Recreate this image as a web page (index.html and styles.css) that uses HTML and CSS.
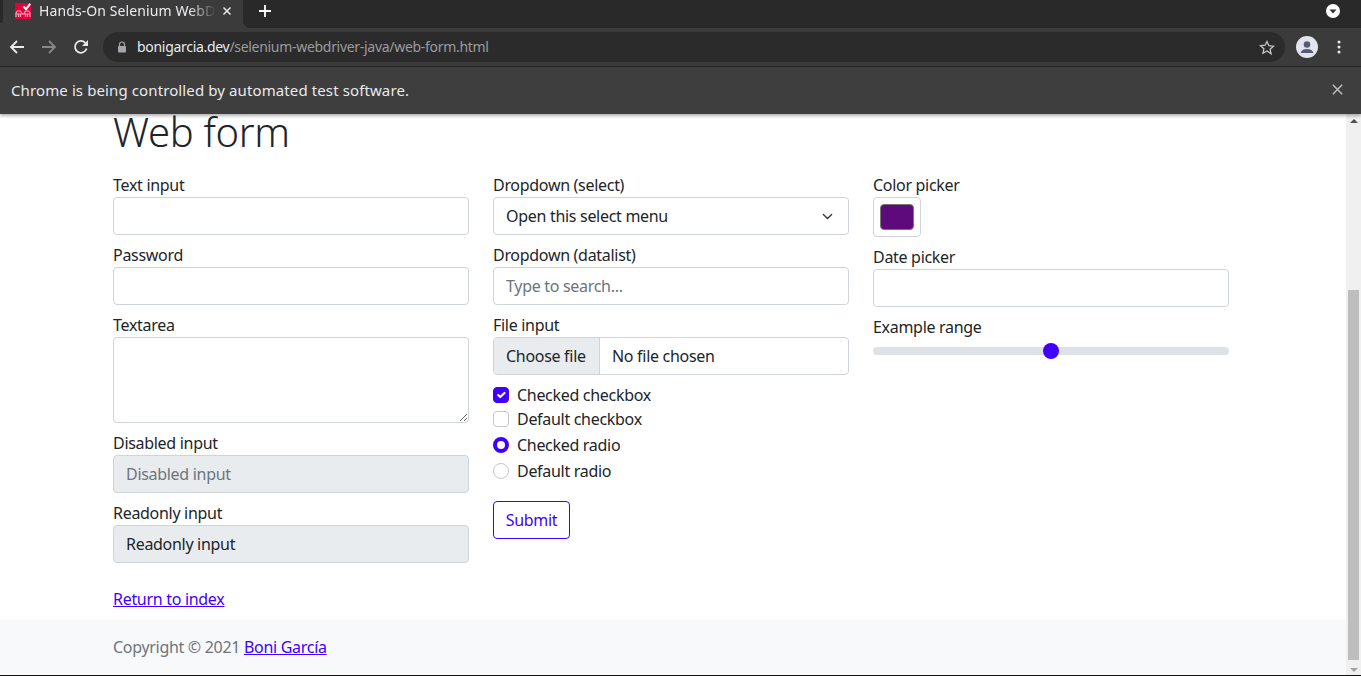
FILE: index.html
```html
<!DOCTYPE html>
<html lang="en">
<head>
    <meta charset="UTF-8">
    <meta name="viewport" content="width=device-width, initial-scale=1.0">
    <title>Hands-On Selenium WebDriver with Java</title>
    <link rel="stylesheet" href="styles.css">
</head>
<body>
    <!-- Barra de abas -->
    <div class="tabbar">
        <div class="tab">
            <svg class="favicon" width="16" height="16" viewBox="0 0 16 16">
                <rect width="16" height="16" fill="#e4003a"/>
                <path d="M8.500 3.500l2.500 2.700L15.200 .8" fill="none" stroke="#fff" stroke-width="2"/>
                <path d="M1 14v-4l1.500-2h3L7 10.500h2L10.500 8h3L15 10v4M1 11h14M3.500 14v-2.500M5.500 14v-2.500M10.500 14v-2.500M12.500 14v-2.500" fill="none" stroke="#f9a6bc" stroke-width="1.200"/>
            </svg>
            <span class="tab-title">Hands-On Selenium WebDriver with Java</span>
            <svg class="tab-close" width="10" height="10" viewBox="0 0 10 10">
                <path d="M1.500 1.500l7 7M8.500 1.500l-7 7" stroke="#e8eaed" stroke-width="1.500"/>
            </svg>
        </div>
        <svg class="tab-new" width="14" height="14" viewBox="0 0 14 14">
            <path d="M7 1v12M1 7h12" stroke="#fff" stroke-width="1.800"/>
        </svg>
        <svg class="tab-search" width="14" height="14" viewBox="0 0 14 14">
            <circle cx="7" cy="7" r="7" fill="#fff"/>
            <path d="M3.500 5.500h7L7 9.500z" fill="#333"/>
        </svg>
    </div>

    <!-- Barra de endereco -->
    <div class="toolbar">
        <svg class="nav-icon" width="16" height="16" viewBox="0 0 16 16">
            <path d="M15 8H2M8 2L2 8l6 6" fill="none" stroke="#e8eaed" stroke-width="1.800"/>
        </svg>
        <svg class="nav-icon" width="16" height="16" viewBox="0 0 16 16">
            <path d="M1 8h13M8 2l6 6-6 6" fill="none" stroke="#85878a" stroke-width="1.800"/>
        </svg>
        <svg class="nav-icon" width="16" height="16" viewBox="0 0 16 16">
            <path d="M13.600 9.500A5.900 5.900 0 1 1 12.300 3.900" fill="none" stroke="#e8eaed" stroke-width="1.800"/>
            <path d="M15 1v6H9z" fill="#e8eaed"/>
        </svg>
        <div class="omnibox">
            <svg class="lock" width="10" height="12" viewBox="0 0 10 12">
                <path d="M2.500 5V3.500a2.500 2.500 0 0 1 5 0V5" fill="none" stroke="#a3a5a8" stroke-width="1.200"/>
                <rect x="1" y="5" width="8" height="6.500" rx="1" fill="#a3a5a8"/>
            </svg>
            <span class="url-host">bonigarcia.dev</span><span class="url-path">/selenium-webdriver-java/web-form.html</span>
            <svg class="star" width="16" height="15" viewBox="0 0 16 15">
                <path d="M8 1.500l1.900 4.200 4.600.5-3.400 3.100 1 4.500L8 11l-4.100 2.300 1-4.500-3.400-3.100 4.600-.5z" fill="none" stroke="#c4c6c9" stroke-width="1.300"/>
            </svg>
        </div>
        <svg class="avatar" width="22" height="22" viewBox="0 0 22 22">
            <circle cx="11" cy="11" r="11" fill="#e3e5ee"/>
            <circle cx="11" cy="8.500" r="3.300" fill="#555b77"/>
            <path d="M4.800 16.500c.6-2.500 3.300-3.500 6.200-3.500s5.600 1 6.200 3.500v.5H4.800z" fill="#555b77"/>
        </svg>
        <svg class="kebab" width="4" height="14" viewBox="0 0 4 14">
            <circle cx="2" cy="2" r="1.500" fill="#e8eaed"/>
            <circle cx="2" cy="7" r="1.500" fill="#e8eaed"/>
            <circle cx="2" cy="12" r="1.500" fill="#e8eaed"/>
        </svg>
    </div>

    <!-- Aviso de automacao -->
    <div class="infobar">
        <span>Chrome is being controlled by automated test software.</span>
        <svg width="11" height="11" viewBox="0 0 11 11">
            <path d="M.8.800l9.400 9.400M10.200.800L.8 10.200" stroke="#bcbec1" stroke-width="1.500"/>
        </svg>
    </div>

    <div class="viewport">
        <div class="page">
            <main class="container">
                <h1 class="title">Web form</h1>
                <form class="form-grid" onsubmit="return false">
                    <div class="col">
                        <label class="field">Text input
                            <input class="control" type="text">
                        </label>
                        <label class="field">Password
                            <input class="control" type="password">
                        </label>
                        <label class="field">Textarea
                            <textarea class="control control-area"></textarea>
                        </label>
                        <label class="field">Disabled input
                            <input class="control" type="text" placeholder="Disabled input" disabled>
                        </label>
                        <label class="field">Readonly input
                            <input class="control control-readonly" type="text" value="Readonly input" readonly>
                        </label>
                    </div>
                    <div class="col">
                        <label class="field">Dropdown (select)
                            <select class="control control-select">
                                <option>Open this select menu</option>
                            </select>
                        </label>
                        <label class="field">Dropdown (datalist)
                            <input class="control" type="text" placeholder="Type to search...">
                        </label>
                        <label class="field">File input
                            <span class="control file-group">
                                <span class="file-button">Choose file</span>
                                <span class="file-name">No file chosen</span>
                            </span>
                        </label>
                        <div class="checks">
                            <label class="check"><input class="box" type="checkbox" checked>Checked checkbox</label>
                            <label class="check"><input class="box" type="checkbox">Default checkbox</label>
                            <label class="check check-radio"><input class="dot" type="radio" name="r" checked>Checked radio</label>
                            <label class="check check-radio"><input class="dot" type="radio" name="r">Default radio</label>
                        </div>
                        <button class="btn-submit" type="submit">Submit</button>
                    </div>
                    <div class="col">
                        <label class="field">Color picker
                            <input class="control-color" type="color" value="#5e0a7c">
                        </label>
                        <label class="field">Date picker
                            <input class="control" type="text">
                        </label>
                        <label class="field">Example range
                            <input class="range" type="range" min="0" max="10" value="5">
                        </label>
                    </div>
                </form>
                <p class="back"><a href="#">Return to index</a></p>
            </main>
            <footer class="footer">
                <span>Copyright © 2021 <a href="#">Boni García</a></span>
            </footer>
        </div>
        <div class="scrollbar">
            <span class="arrow-up"></span>
            <span class="thumb"></span>
            <span class="arrow-down"></span>
        </div>
    </div>
</body>
</html>
```

FILE: styles.css
```css
* {
    box-sizing: border-box;
}
html, body {
    height: 100%;
}
body {
    margin: 0;
    height: 676px;
    overflow: hidden;
    display: flex;
    flex-direction: column;
    font-family: "Noto Sans", "Liberation Sans", sans-serif;
    font-size: 16px;
    line-height: 24px;
    letter-spacing: -0.3px;
    color: #212529;
    background-color: white;
}
a {
    color: #3f00ff;
}

/* Navegador */
.tabbar {
    height: 28px;
    padding-bottom: 6px;
    display: flex;
    align-items: center;
    background-color: #292929;
    color: #e8eaed;
    font-size: 14px;
    letter-spacing: 0.1px;
}
.tab {
    position: relative;
    width: 240px;
    height: 28px;
    margin-top: 6px;
    margin-left: 3px;
    padding: 0 11px 6px 12px;
    display: flex;
    align-items: center;
    background-color: #3b3b3b;
}
.tab::before,
.tab::after {
    content: "";
    position: absolute;
    bottom: 0;
    height: 8px;
}
.tab::before {
    right: 100%;
    width: 3px;
    background: radial-gradient(circle at 0 0, #292929 3px, #3b3b3b 3.5px);
}
.tab::after {
    left: 100%;
    width: 8px;
    background: radial-gradient(circle at 100% 0, #292929 8px, #3b3b3b 8.5px);
}
.favicon {
    flex: none;
}
.tab-title {
    flex: 1;
    margin-left: 8px;
    white-space: nowrap;
    overflow: hidden;
    -webkit-mask-image: linear-gradient(to right, black 85%, transparent);
    mask-image: linear-gradient(to right, black 85%, transparent);
}
.tab-close {
    flex: none;
    margin-left: 6px;
}
.tab-new {
    margin-left: 15px;
}
.tab-search {
    margin-left: auto;
    margin-right: 21px;
}
.toolbar {
    height: 39px;
    display: flex;
    align-items: center;
    background-color: #3b3b3b;
    border-bottom: 1px solid #242424;
}
.nav-icon {
    flex: none;
    margin-left: 9px;
    margin-right: 7px;
}
.nav-icon + .nav-icon {
    margin-left: 9px;
}
.omnibox {
    flex: 1;
    height: 30px;
    margin-left: 7px;
    padding: 0 10px 0 14px;
    display: flex;
    align-items: center;
    border-radius: 15px;
    background-color: #2b2b2b;
    font-size: 14px;
    letter-spacing: -0.3px;
}
.lock {
    margin-right: 10px;
}
.url-host {
    color: #e8eaed;
}
.url-path {
    color: #9a9c9f;
}
.star {
    margin-left: auto;
}
.avatar {
    flex: none;
    margin-left: 11px;
}
.kebab {
    flex: none;
    margin-left: 19px;
    margin-right: 20px;
}
.infobar {
    position: relative;
    z-index: 2;
    height: 47px;
    padding: 0 18px 2px 11px;
    display: flex;
    align-items: center;
    justify-content: space-between;
    background-color: #3e3e3e;
    color: #e8eaed;
    font-size: 15px;
    letter-spacing: 0.11px;
    box-shadow: 0 2px 3px rgba(0, 0, 0, 0.3);
}

/* Pagina */
.viewport {
    flex: 1;
    min-height: 0;
    display: flex;
    border-bottom: 1px solid #111;
}
.page {
    flex: 1;
    min-width: 0;
    display: flex;
    flex-direction: column;
}
.container {
    flex: 1;
    padding-left: 113px;
}
.title {
    height: 59px;
    margin: 0;
    font-size: 40px;
    font-weight: 300;
    line-height: 36px;
}
.form-grid {
    display: flex;
    gap: 24px;
}
.col {
    width: 356px;
    display: flex;
    flex-direction: column;
}
.field {
    display: block;
    margin-bottom: 8px;
}
.control {
    display: block;
    width: 100%;
    height: 38px;
    padding: 6px 12px;
    border: 1px solid #ced4da;
    border-radius: 4px;
    background-color: white;
    color: #212529;
    font: inherit;
    letter-spacing: inherit;
    appearance: none;
}
.control::placeholder {
    color: #6c757d;
    opacity: 1;
}
.control:disabled,
.control-readonly {
    background-color: #e9ecef;
}
.control-area {
    height: 86px;
    resize: vertical;
}
.control-select {
    padding-right: 36px;
    background-image: url("data:image/svg+xml,%3csvg xmlns='http://www.w3.org/2000/svg' viewBox='0 0 16 16'%3e%3cpath fill='none' stroke='%23343a40' stroke-linecap='round' stroke-linejoin='round' stroke-width='2' d='M2 5l6 6 6-6'/%3e%3c/svg%3e");
    background-repeat: no-repeat;
    background-position: right 14px center;
    background-size: 13px 11px;
}
.file-group {
    padding: 0;
    display: flex;
    align-items: center;
    overflow: hidden;
}
.file-button {
    width: 106px;
    height: 36px;
    padding-left: 12px;
    display: flex;
    align-items: center;
    border-right: 1px solid #ced4da;
    background-color: #e9ecef;
}
.file-name {
    margin-left: 12px;
}
.checks {
    display: flex;
    flex-direction: column;
}
.check {
    height: 24px;
    display: flex;
    align-items: center;
    gap: 8px;
}
.check-radio {
    margin-top: 2px;
}
.box,
.dot {
    flex: none;
    width: 16px;
    height: 16px;
    margin: 0;
    border: 1px solid #c4c8cc;
    background-color: white;
    appearance: none;
}
.box {
    border-radius: 4px;
}
.dot {
    border-radius: 50%;
}
.box:checked {
    border-color: #3f00ff;
    background-color: #3f00ff;
    background-image: url("data:image/svg+xml,%3csvg xmlns='http://www.w3.org/2000/svg' viewBox='0 0 20 20'%3e%3cpath fill='none' stroke='%23fff' stroke-linecap='round' stroke-linejoin='round' stroke-width='3' d='M6 10l3 3 6-6'/%3e%3c/svg%3e");
}
.dot:checked {
    border: 4px solid #3f00ff;
}
.btn-submit {
    align-self: flex-start;
    width: 77px;
    height: 38px;
    margin-top: 18px;
    padding: 0;
    border: 1px solid #3f00ff;
    border-radius: 4px;
    background-color: white;
    color: #3f00ff;
    font: inherit;
    letter-spacing: inherit;
}
.control-color {
    display: block;
    width: 48px;
    height: 40px;
    padding: 6px;
    border: 1px solid #ced4da;
    border-radius: 4px;
    background-color: white;
    appearance: none;
}
.control-color::-webkit-color-swatch-wrapper {
    padding: 0;
}
.control-color::-webkit-color-swatch {
    border: 1px solid #777;
    border-radius: 4px;
}
.range {
    display: block;
    width: 100%;
    height: 16px;
    margin: 4px 0 0;
    background: transparent;
    appearance: none;
}
.range::-webkit-slider-runnable-track {
    height: 8px;
    border-radius: 4px;
    background-color: #dee2e6;
}
.range::-webkit-slider-thumb {
    width: 16px;
    height: 16px;
    margin-top: -4px;
    border-radius: 50%;
    background-color: #3f00ff;
    appearance: none;
}
.back {
    margin: 16px 0 0;
}
.footer {
    height: 56px;
    padding-left: 113px;
    display: flex;
    align-items: center;
    background-color: #f8f9fa;
    color: #6c757d;
}

/* Barra de rolagem */
.scrollbar {
    flex: none;
    width: 15px;
    padding: 5px 2px 3px 2px;
    display: flex;
    flex-direction: column;
    align-items: center;
    background-color: #f0f0f0;
}
.arrow-up,
.arrow-down {
    width: 0;
    height: 0;
    border-left: 4px solid transparent;
    border-right: 4px solid transparent;
}
.arrow-up {
    border-bottom: 4px solid #505050;
}
.arrow-down {
    margin-top: 4px;
    border-top: 4px solid #a3a3a3;
}
.thumb {
    width: 11px;
    height: 370px;
    margin-top: auto;
    margin-bottom: 4px;
    background-color: #bebebe;
}
```
